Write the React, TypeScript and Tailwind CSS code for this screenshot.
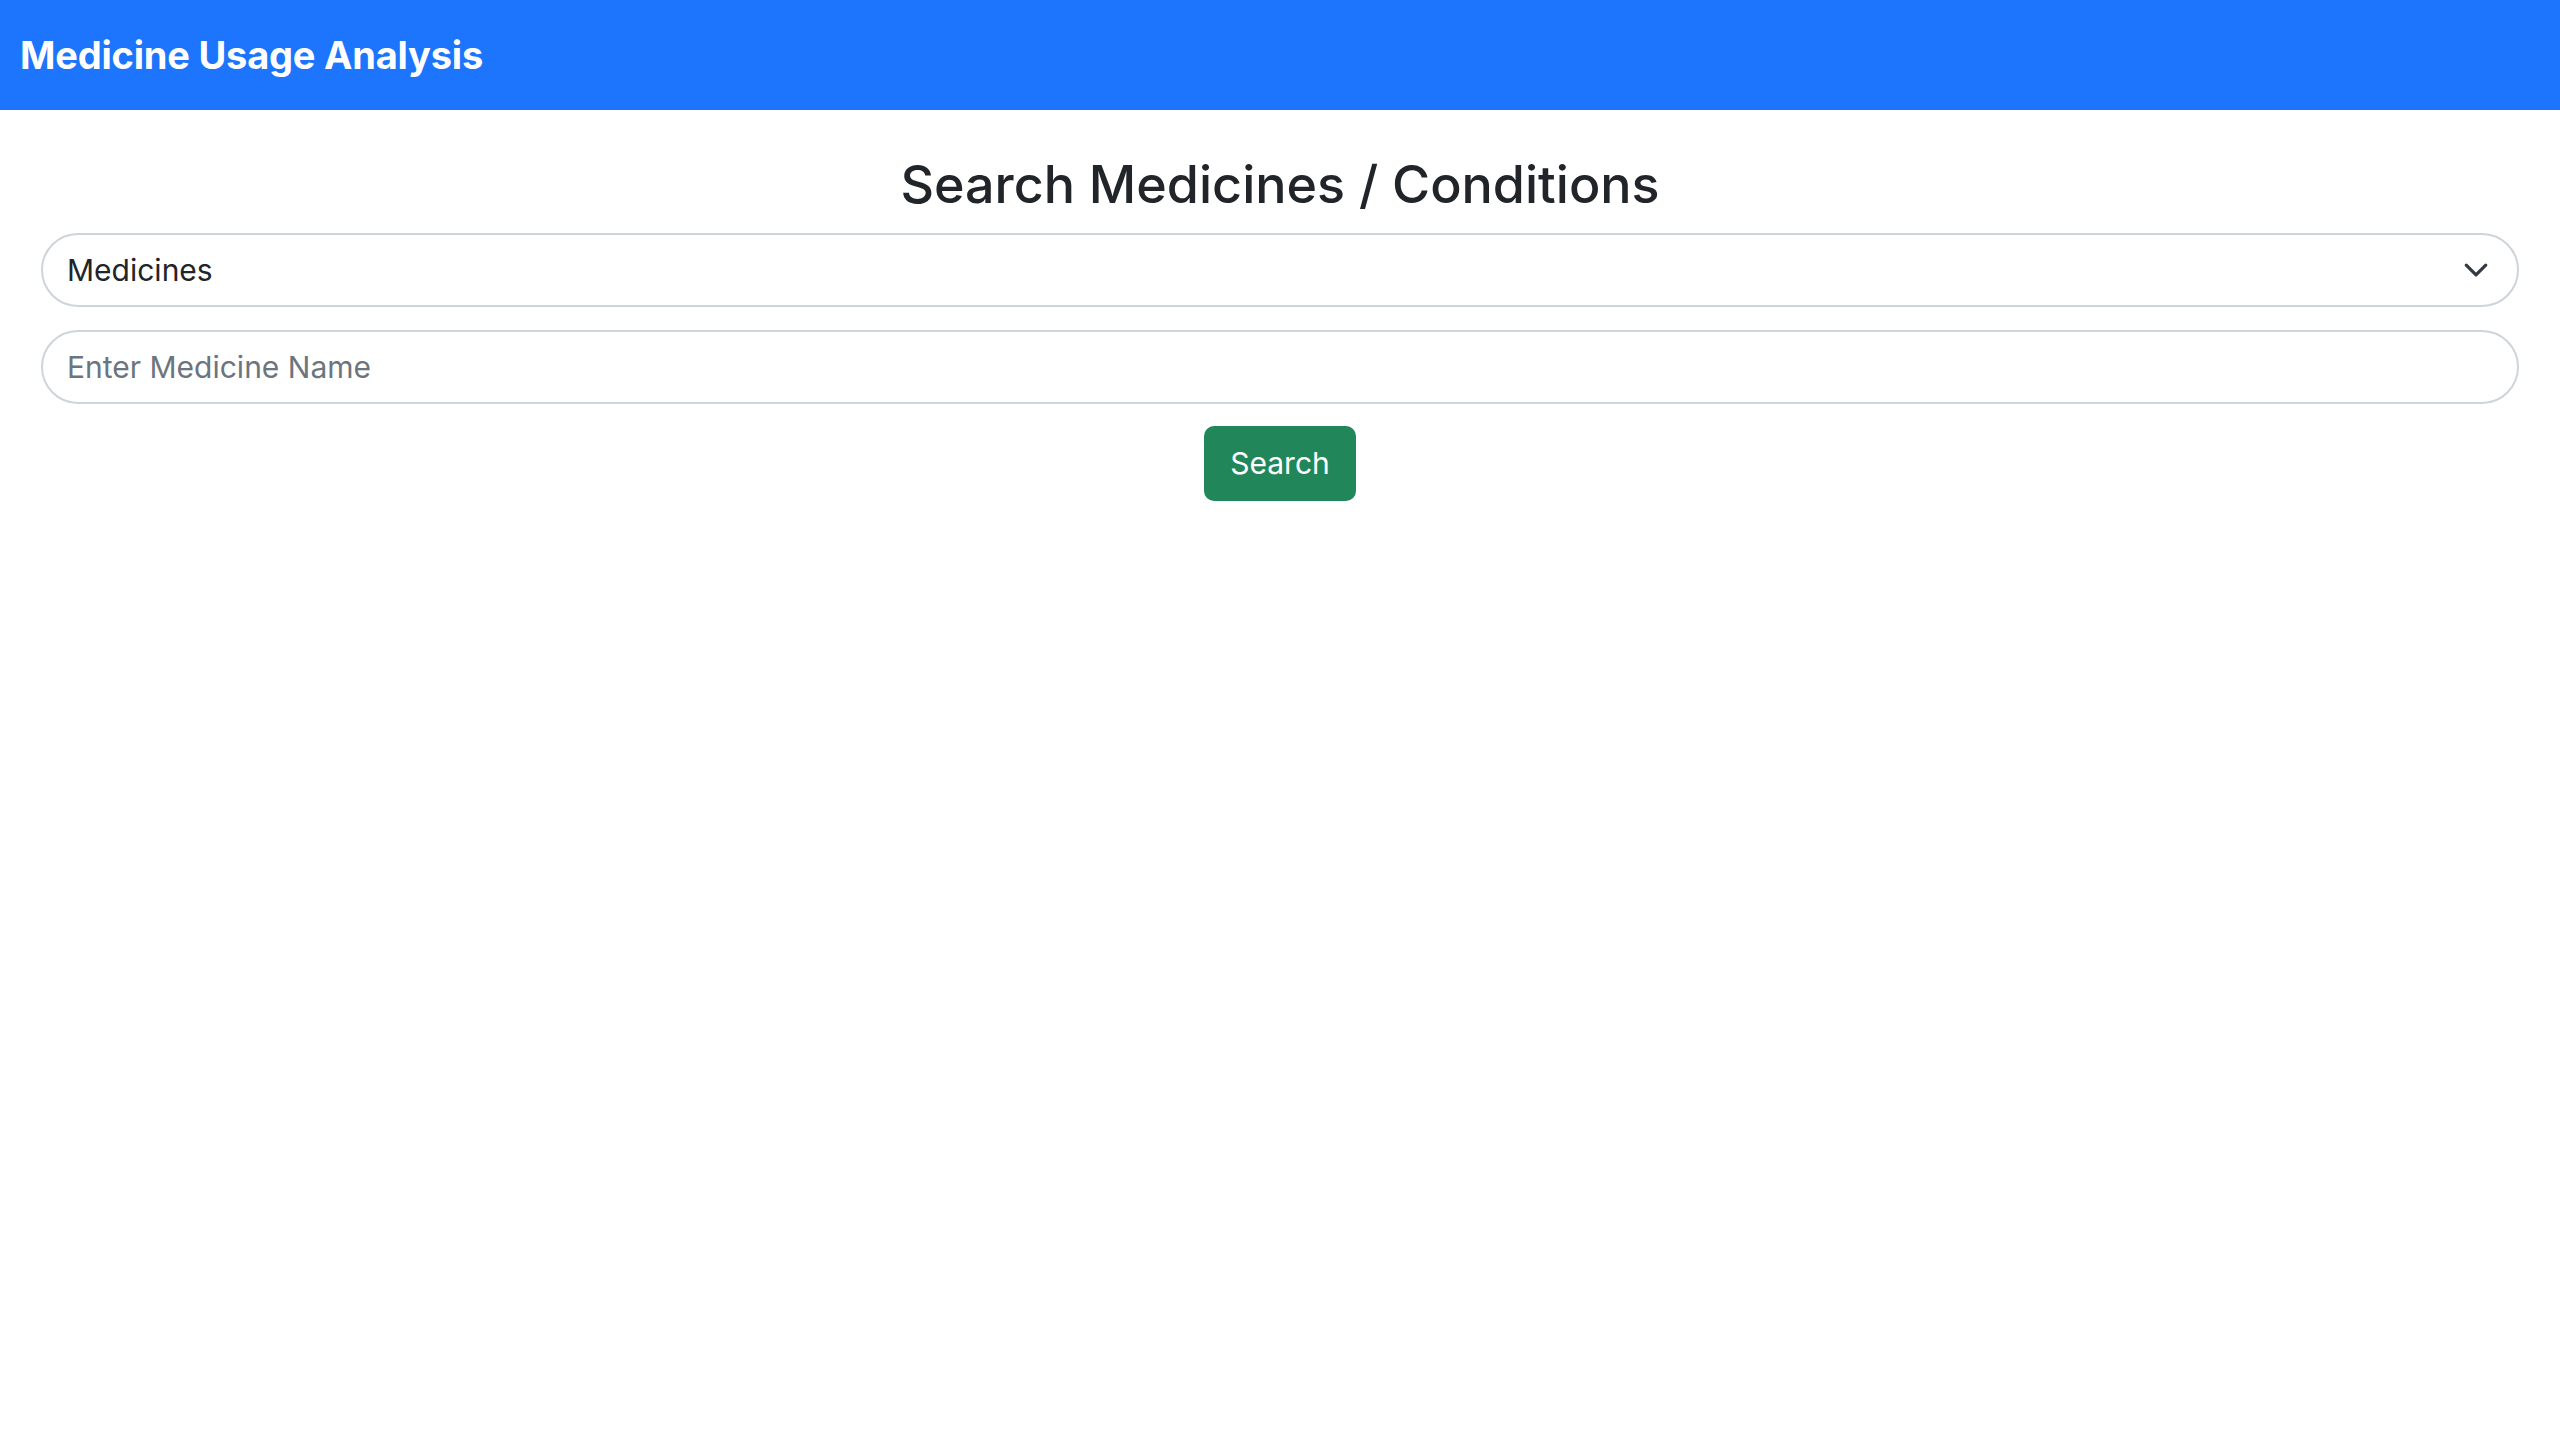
import { useState } from "react";

export default function App() {
  const [type, setType] = useState("medicines");
  const [query, setQuery] = useState("");

  return (
    <div className="min-h-screen bg-white text-[#212529] font-['Inter','Liberation_Sans',sans-serif]">
      {/* Top bar */}
      <nav className="h-[110px] bg-[#1c75fc] flex items-center px-[20px]">
        <span className="text-white font-bold text-[38px] tracking-[-0.2px]">
          Medicine Usage Analysis
        </span>
      </nav>

      <div className="px-[41px] pt-[44px]">
        <h2 className="text-center text-[52px] leading-[62px] font-medium mb-[17px]">
          Search Medicines / Conditions
        </h2>

        <div className="relative mb-[23px]">
          <select
            value={type}
            onChange={(e) => setType(e.target.value)}
            className="w-full h-[74px] appearance-none rounded-full border-2 border-[#ced4da] bg-white pl-[24px] pr-[80px] text-[30px] text-[#212529] outline-none"
          >
            <option value="medicines">Medicines</option>
            <option value="conditions">Conditions</option>
          </select>
          <svg
            className="pointer-events-none absolute right-[30px] top-1/2 -translate-y-1/2 w-[26px] h-[26px]"
            viewBox="0 0 16 16"
            fill="none"
            stroke="#343a40"
            strokeWidth="2"
            strokeLinecap="round"
            strokeLinejoin="round"
          >
            <path d="m2 5 6 6 6-6" />
          </svg>
        </div>

        <input
          value={query}
          onChange={(e) => setQuery(e.target.value)}
          placeholder="Enter Medicine Name"
          className="block w-full h-[74px] rounded-full border-2 border-[#ced4da] px-[24px] text-[30px] outline-none placeholder:text-[#6c757d] mb-[22px]"
        />

        <div className="flex justify-center">
          <button className="h-[75px] w-[152px] rounded-[10px] bg-[#21875a] text-white text-[30px]">
            Search
          </button>
        </div>
      </div>
    </div>
  );
}
